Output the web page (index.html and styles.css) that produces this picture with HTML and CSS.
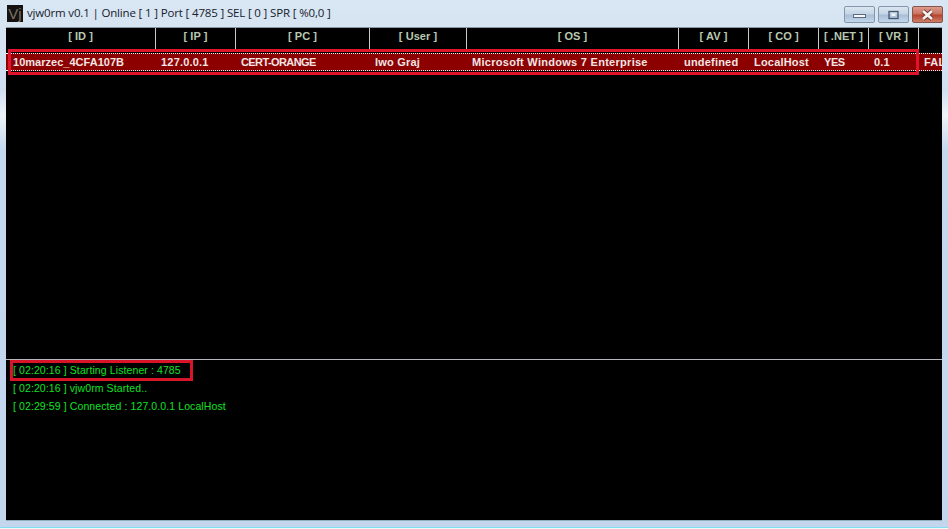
FILE: index.html
```html
<!DOCTYPE html>
<html lang="en">
<head>
<meta charset="utf-8">
<title>vjw0rm v0.1</title>
<link rel="stylesheet" href="styles.css">
</head>
<body>
<div class="window">
  <header class="titlebar">
    <div class="app-icon">Vj</div>
    <div class="title">vjw0rm v0.1 | Online [ 1 ] Port [ 4785 ] SEL [ 0 ] SPR [ %0,0 ]</div>
    <div class="controls">
      <button class="ctl"><svg width="15" height="9" viewBox="0 0 15 9"><rect x="1.5" y="4.5" width="12" height="3" fill="#f4f8fb" stroke="#5b6b7d"/></svg></button>
      <button class="ctl"><svg width="13" height="10" viewBox="0 0 13 10"><rect x="2" y="1.5" width="9" height="7" fill="none" stroke="#46566a" stroke-width="1.3"/><rect x="4.5" y="3.5" width="4" height="2.5" fill="#f0f4f8"/></svg></button>
      <button class="ctl close"><svg width="17" height="12" viewBox="0 0 17 12"><path d="M4 2 13 10M13 2 4 10" stroke="#6e3a30" stroke-width="4.4"/><path d="M4 2 13 10M13 2 4 10" stroke="#f6f2f0" stroke-width="2.6"/></svg></button>
    </div>
  </header>
  <main class="client">
    <section class="list">
      <div class="head">
        <div class="hc c-id">[ ID ]</div>
        <div class="hc c-ip">[ IP ]</div>
        <div class="hc c-pc">[ PC ]</div>
        <div class="hc c-user">[ User ]</div>
        <div class="hc c-os">[ OS ]</div>
        <div class="hc c-av">[ AV ]</div>
        <div class="hc c-co">[ CO ]</div>
        <div class="hc c-net">[ .NET ]</div>
        <div class="hc c-vr">[ VR ]</div>
      </div>
      <div class="row">
        <div class="cell c-id">10marzec_4CFA107B</div>
        <div class="cell c-ip">127.0.0.1</div>
        <div class="cell c-pc">CERT-ORANGE</div>
        <div class="cell c-user">Iwo Graj</div>
        <div class="cell c-os">Microsoft Windows 7 Enterprise</div>
        <div class="cell c-av">undefined</div>
        <div class="cell c-co">LocalHost</div>
        <div class="cell c-net">YES</div>
        <div class="cell c-vr">0.1</div>
        <div class="cell c-last">FAL</div>
      </div>
      <div class="mark mark-row"></div>
    </section>
    <section class="log">
      <div class="log-line">[ 02:20:16 ] Starting Listener : 4785<div class="mark mark-log"></div></div>
      <div class="log-line">[ 02:20:16 ] vjw0rm Started..</div>
      <div class="log-line">[ 02:29:59 ] Connected : 127.0.0.1 LocalHost</div>
    </section>
  </main>
</div>
</body>
</html>
```
FILE: styles.css
```css
* { box-sizing: border-box; }
html, body { margin: 0; height: 100%; overflow: hidden; }
body { font-family: "Liberation Sans", Arial, sans-serif; background: #c3d6ea; }
.window {
  width: 948px; height: 529px; display: flex; flex-direction: column;
  background: linear-gradient(180deg, #d9e6f3 0, #cfdff0 90px, #eef3f8 115px, #c4d8ee 150px, #c3d6ee 100%);
  box-shadow: inset 0 -1px #f4f8fb, inset 0 -2px #7fe0ef;
  padding: 0 6px 9px;
}
.titlebar { height: 27px; display: flex; align-items: center; margin: 0 -1px; flex: none; }
.app-icon {
  width: 16px; height: 17px; background: #141210; color: #7d7263; font-size: 15px; line-height: 17px;
  text-align: center; margin: 0 4px 0 2px; flex: none;
}
.title { font-family: "Open Sans", "Liberation Sans", sans-serif; font-size: 11.5px; color: #15202c; flex: 1; white-space: nowrap; letter-spacing: -.16px; position: relative; top: -1px; }
.controls { display: flex; gap: 3px; margin: 2px 0 0 0; }
.ctl {
  width: 31px; height: 17px; padding: 0; border: 1px solid #8496aa; border-radius: 2px;
  background: linear-gradient(180deg, #dbe6f1 0, #c3d4e6 48%, #a8bed6 52%, #c2d6ec 100%);
  display: flex; align-items: center; justify-content: center;
}
.close { background: linear-gradient(180deg, #dd9a8c 0, #c9715f 48%, #b5412c 52%, #cf7e68 100%); border-color: #85564c; }
.client { flex: 1; min-height: 0; background: #000; display: flex; flex-direction: column; border-top: 1px solid #8a98a6; box-shadow: 0 1px #8fb0b8; }
.list { height: 331px; flex: none; position: relative; overflow: hidden; }
.head { display: flex; height: 22px; }
.hc {
  height: 22px; border-right: 1px solid #c8c8c8; text-align: center;
  font-size: 11px; font-weight: bold; line-height: 16px; color: #b9c9b0; letter-spacing: .05px; flex: none;
}
.c-id { width: 150px; }
.c-ip { width: 80px; }
.c-pc { width: 134px; }
.c-user { width: 97px; }
.c-os { width: 212px; }
.c-av { width: 70px; }
.c-co { width: 70px; }
.c-net { width: 50px; }
.c-vr { width: 50px; }
.row {
  display: flex; height: 18px; margin-top: 3px; background: #8c0000; color: #f3e6e6;
  font-size: 11px; font-weight: bold; line-height: 17px;
  border-top: 1px dotted #fff; border-bottom: 1px dotted #fff; width: 936px;
}
.cell { padding-left: 5px; white-space: nowrap; overflow: hidden; flex: none; letter-spacing: .2px; }
.row .c-id { padding-left: 7px; letter-spacing: .02px; }
.row .c-pc { letter-spacing: -.6px; }
.row .c-os { letter-spacing: .28px; }
.row .c-net { letter-spacing: -.4px; }
.c-last { flex: 1; }
.mark { position: absolute; border: 3px solid #e0142a; pointer-events: none; }
.mark-row { left: 2px; top: 21px; width: 911px; height: 26px; }
.log { flex: 1; border-top: 1px solid #b4b8bc; padding: 1px 0 0 7px; }
.log-line { height: 18px; line-height: 18px; font-size: 10.5px; color: #12e024; position: relative; white-space: nowrap; letter-spacing: .1px; }
.mark-log { left: -3px; top: -1px; width: 183px; height: 21px; border-color: #d81428; }
```
